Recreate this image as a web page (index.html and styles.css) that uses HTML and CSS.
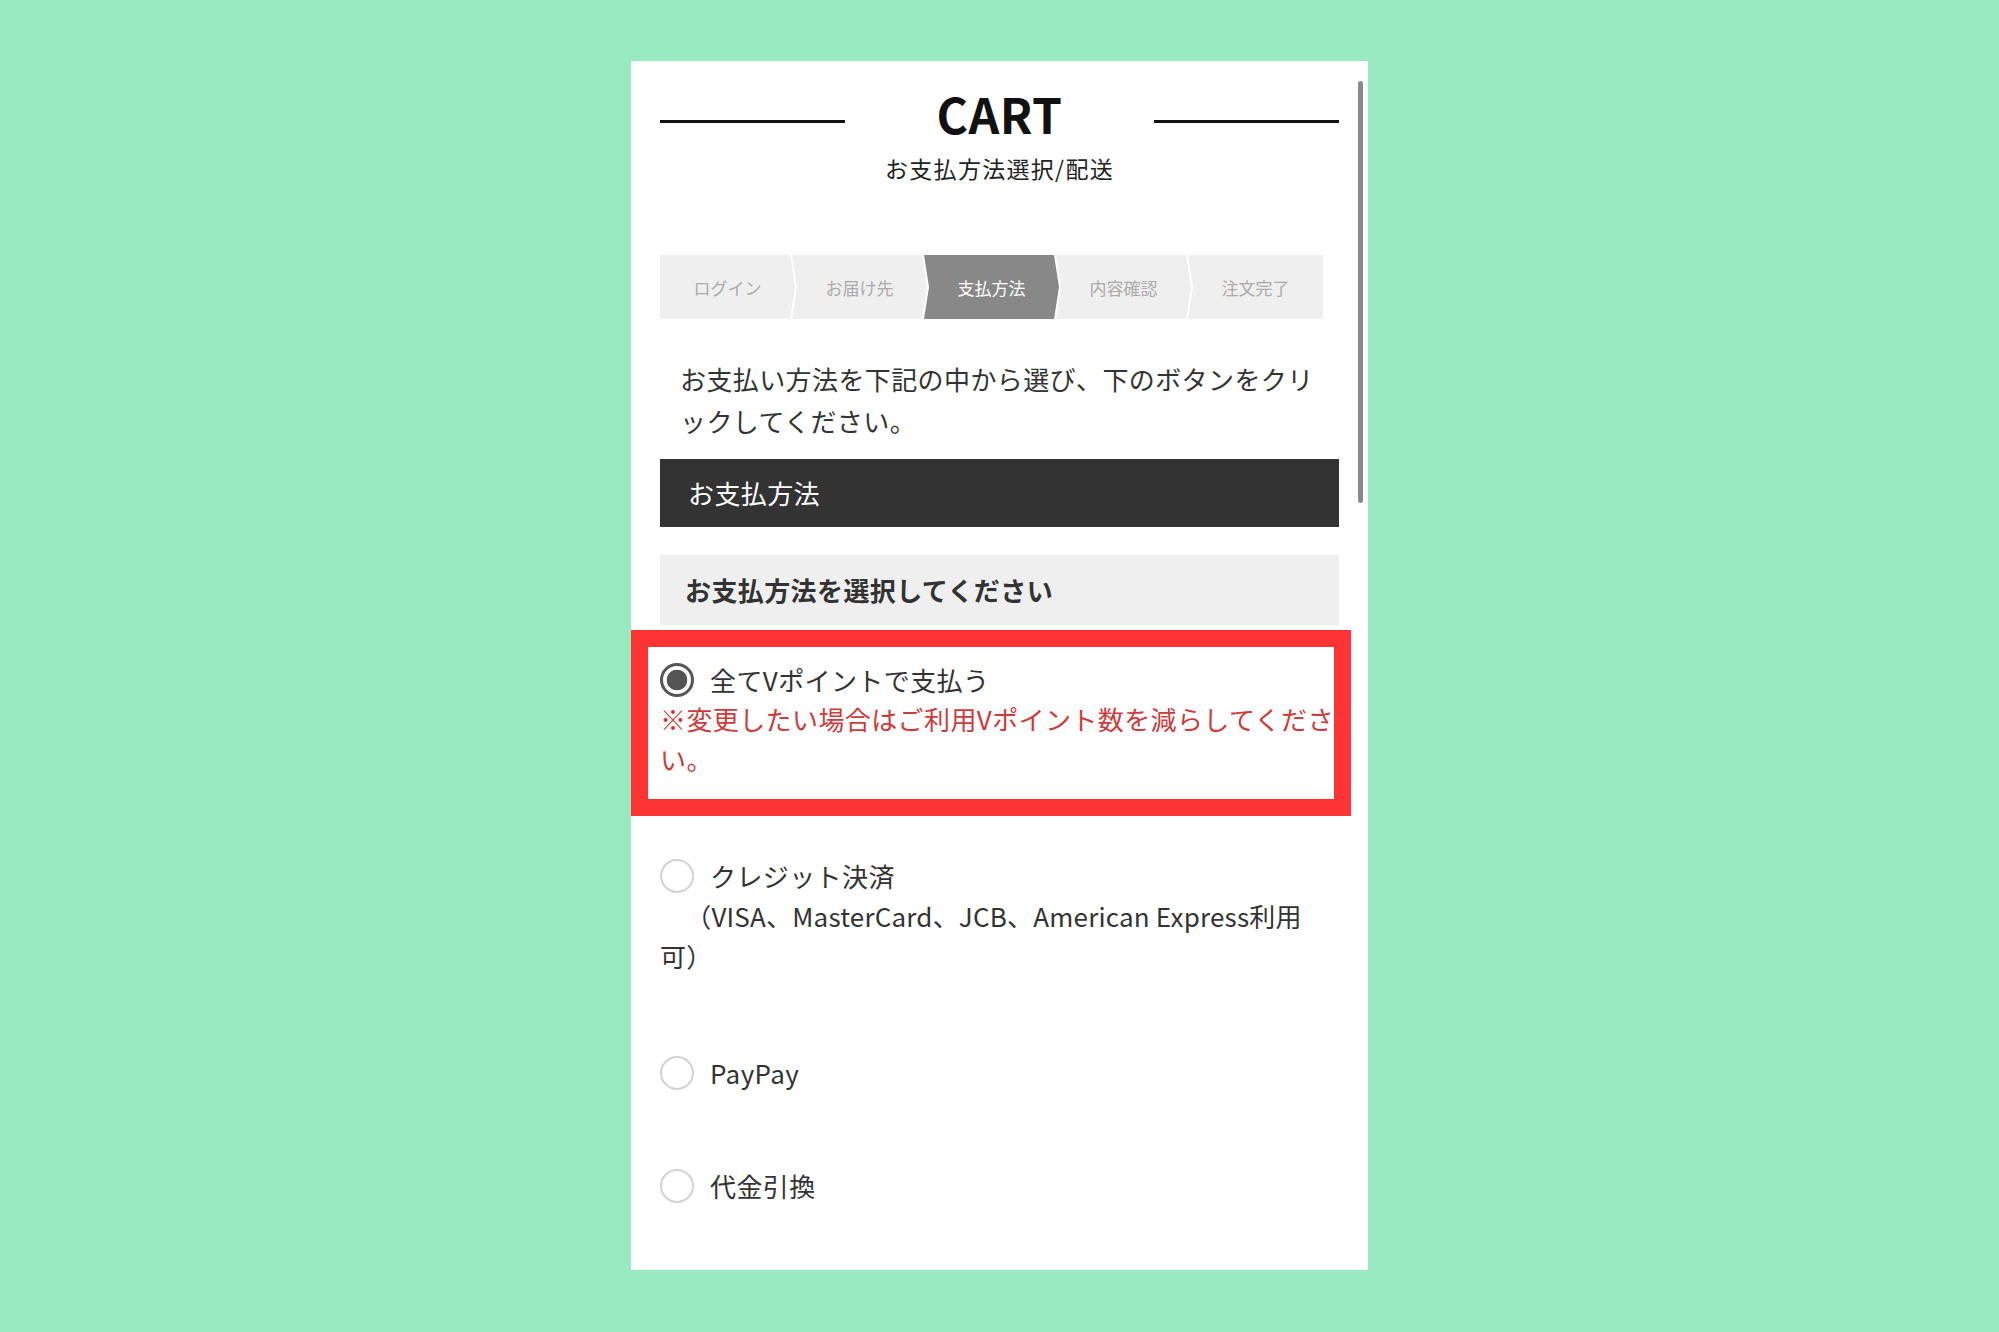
FILE: index.html
```html
<!DOCTYPE html>
<html lang="ja">
<head>
<meta charset="utf-8">
<title>CART</title>
<link rel="stylesheet" href="styles.css">
</head>
<body>
<div class="card">
  <header class="head">
    <div class="title-row">
      <span class="rule"></span>
      <h1 class="title">CART</h1>
      <span class="rule"></span>
    </div>
    <p class="subtitle">お支払方法選択/配送</p>
  </header>

  <ol class="steps">
    <li class="step first">ログイン</li>
    <li class="step">お届け先</li>
    <li class="step active">支払方法</li>
    <li class="step">内容確認</li>
    <li class="step last">注文完了</li>
  </ol>

  <p class="intro">お支払い方法を下記の中から選び、下のボタンをクリックしてください。</p>

  <h2 class="section-bar">お支払方法</h2>
  <h3 class="section-sub">お支払方法を選択してください</h3>

  <div class="options">
    <div class="option opt-point">
      <label class="opt-label"><input type="radio" name="pay" class="radio" checked><span>全てVポイントで支払う</span></label>
      <p class="note">※変更したい場合はご利用Vポイント数を減らしてください。</p>
    </div>
    <div class="option opt-credit">
      <label class="opt-label"><input type="radio" name="pay" class="radio"><span>クレジット決済</span></label>
      <p class="opt-desc">　（VISA、MasterCard、JCB、American Express利用可）</p>
    </div>
    <div class="option opt-paypay">
      <label class="opt-label"><input type="radio" name="pay" class="radio"><span>PayPay</span></label>
    </div>
    <div class="option opt-cod">
      <label class="opt-label"><input type="radio" name="pay" class="radio"><span>代金引換</span></label>
    </div>
  </div>

  <div class="highlight"></div>
  <div class="scrollbar"></div>
</div>
</body>
</html>
```

FILE: styles.css
```css
* { box-sizing: border-box; }
html, body { margin: 0; padding: 0; }
body {
  background: #98ebc1;
  font-family: "Noto Sans CJK JP", "Noto Sans", sans-serif;
  color: #333;
  height: 1332px;
  overflow: hidden;
}
.card {
  position: relative;
  width: 737px;
  height: 1209px;
  margin: 61px auto 0;
  background: #fff;
  padding: 28px 29px 0;
  overflow: hidden;
}
.head { text-align: center; }
.title-row {
  display: flex;
  justify-content: space-between;
  align-items: flex-start;
}
.rule {
  width: 185px;
  height: 3px;
  background: #111;
  margin-top: 31px;
}
.title {
  margin: 0;
  font-size: 48px;
  line-height: 48px;
  font-weight: 700;
  color: #111;
  letter-spacing: 0.5px;
}
.subtitle {
  margin: 16px 0 0;
  font-size: 23px;
  line-height: 30px;
  letter-spacing: 1.3px;
  color: #222;
}
.steps {
  list-style: none;
  margin: 72px 0 0;
  padding: 0;
  display: flex;
  width: 663px;
  height: 64px;
}
.step {
  flex: 1;
  margin-left: -3px;
  background: #efefef;
  color: #ababab;
  font-size: 17px;
  display: flex;
  align-items: center;
  justify-content: center;
  clip-path: polygon(0 0, calc(100% - 5px) 0, 100% 50%, calc(100% - 5px) 100%, 0 100%, 5px 50%);
}
.step.first {
  margin-left: 0;
  clip-path: polygon(0 0, calc(100% - 5px) 0, 100% 50%, calc(100% - 5px) 100%, 0 100%);
}
.step.last {
  clip-path: polygon(0 0, 100% 0, 100% 100%, 0 100%, 5px 50%);
}
.step.active {
  background: #888;
  color: #fff;
}
.intro {
  margin: 39px 0 0;
  padding: 0 20px;
  font-size: 26px;
  line-height: 42px;
  letter-spacing: 0.4px;
  color: #333;
}
.section-bar {
  margin: 17px 0 0;
  height: 68px;
  background: #333;
  color: #fff;
  font-size: 26px;
  font-weight: 400;
  line-height: 68px;
  padding-left: 28px;
  letter-spacing: 0.4px;
}
.section-sub {
  margin: 28px 0 0;
  height: 70px;
  background: #efefef;
  color: #333;
  font-size: 26px;
  font-weight: 700;
  line-height: 70px;
  padding-left: 25px;
  letter-spacing: 0.4px;
}
.options {
  margin-top: 35px;
  display: flex;
  flex-direction: column;
}
.option {
  font-size: 26px;
  line-height: 40px;
  letter-spacing: 0.4px;
  color: #333;
}
.opt-credit { margin-top: 77px; }
.opt-paypay { margin-top: 77px; }
.opt-cod { margin-top: 73px; }
.opt-label {
  display: flex;
  align-items: center;
  gap: 16px;
  height: 40px;
}
.radio {
  appearance: none;
  -webkit-appearance: none;
  margin: 0;
  width: 34px;
  height: 34px;
  border-radius: 50%;
  border: 2px solid #d2d2d2;
  background: #fff;
  flex: none;
}
.radio:checked {
  border: 3px solid #555;
  background: radial-gradient(circle, #555 0 10px, #fff 10.6px);
}
.note {
  margin: -1px 0 0;
  color: #cf3a3a;
}
.opt-desc {
  margin: 0;
  padding-right: 15px;
  text-indent: 12px;
  letter-spacing: 0.2px;
  color: #333;
}
.highlight {
  position: absolute;
  left: 0;
  top: 569px;
  width: 720px;
  height: 186px;
  border: 17px solid #fe3434;
  pointer-events: none;
}
.scrollbar {
  position: absolute;
  right: 5px;
  top: 20px;
  width: 5px;
  height: 422px;
  border-radius: 3px;
  background: #8a8a8a;
}
```
